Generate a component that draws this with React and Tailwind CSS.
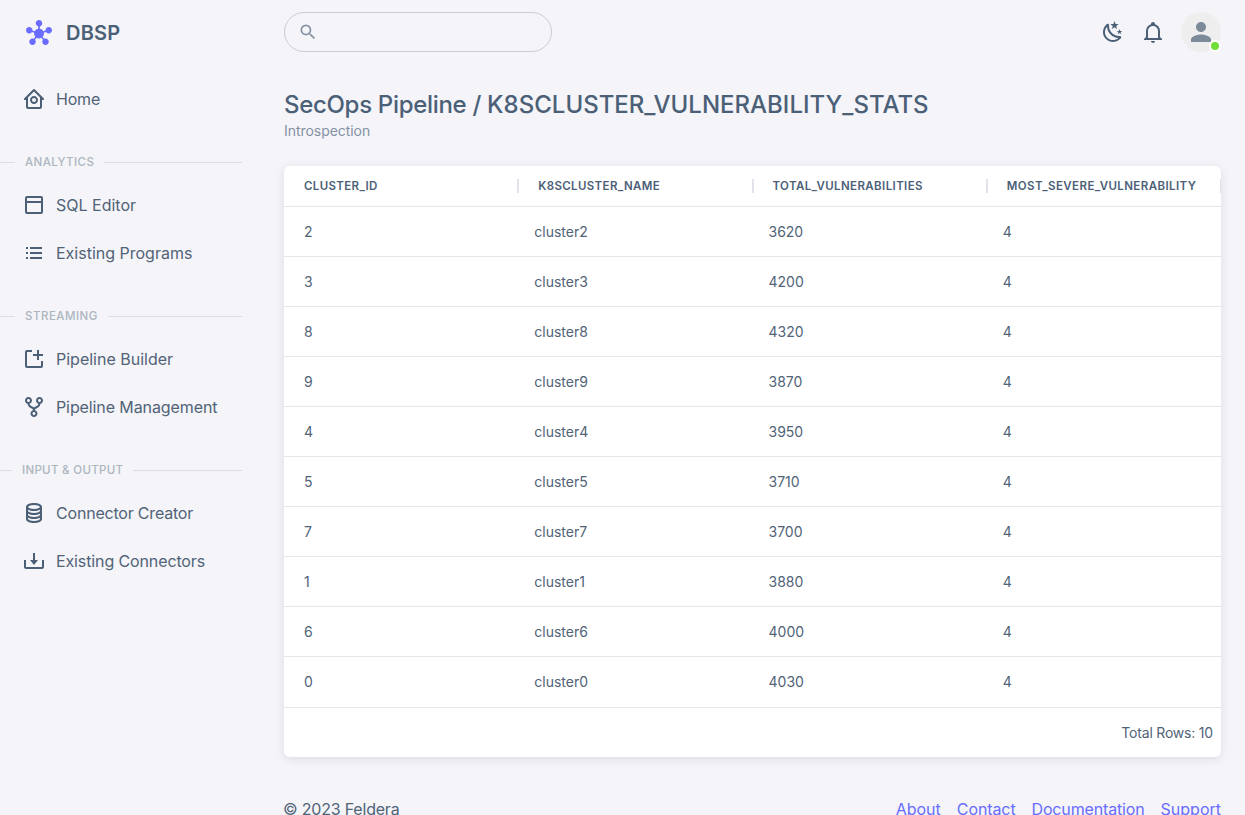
import { MdHub, MdSearch, MdPerson } from 'react-icons/md'
import { BiHomeCircle, BiListUl, BiGitRepoForked, BiCoinStack, BiDownload } from 'react-icons/bi'

const WindowIcon = ({ className }) => (
  <svg viewBox="0 0 24 24" fill="currentColor" className={className}>
    <path d="M19 3H5a2 2 0 0 0-2 2v14a2 2 0 0 0 2 2h14a2 2 0 0 0 2-2V5a2 2 0 0 0-2-2zm0 2v3H5V5zM5 19v-9h14v9z" />
  </svg>
)

const AddShapeIcon = ({ className }) => (
  <svg viewBox="0 0 24 24" fill="currentColor" className={className}>
    <path d="M5 21h14a2 2 0 0 0 2-2v-5h-2v5H5V5h5V3H5a2 2 0 0 0-2 2v14a2 2 0 0 0 2 2z" />
    <path d="M17 3h-2v4h-4v2h4v4h2V9h4V7h-4z" />
  </svg>
)

const MoonIcon = ({ className }) => (
  <svg viewBox="0 0 24 24" fill="currentColor" className={className}>
    <path d="M17.75,4.09L15.22,6.03L16.13,9.09L13.5,7.28L10.87,9.09L11.78,6.03L9.25,4.09L12.44,4L13.5,1L14.56,4L17.75,4.09M21.25,11L19.61,12.25L20.2,14.23L18.5,13.06L16.8,14.23L17.39,12.25L15.75,11L17.81,10.95L18.5,9L19.19,10.95L21.25,11M18.97,15.95C19.8,15.87 20.69,17.05 20.16,17.8C19.84,18.25 19.5,18.67 19.08,19.07C15.17,23 8.84,23 4.94,19.07C1.03,15.17 1.03,8.83 4.94,4.93C5.34,4.53 5.76,4.17 6.21,3.85C6.96,3.32 8.14,4.21 8.06,5.04C7.79,7.9 8.75,10.87 10.95,13.06C13.14,15.26 16.1,16.22 18.97,15.95M17.33,17.97C14.5,17.81 11.7,16.64 9.53,14.5C7.36,12.31 6.2,9.5 6.04,6.68C3.23,9.82 3.34,14.64 6.35,17.66C9.37,20.67 14.19,20.78 17.33,17.97Z" />
  </svg>
)

const BellIcon = ({ className }) => (
  <svg viewBox="0 0 24 24" fill="currentColor" className={className}>
    <path d="M10 21H14C14 22.1 13.1 23 12 23S10 22.1 10 21M21 19V20H3V19L5 17V11C5 7.9 7 5.2 10 4.3V4C10 2.9 10.9 2 12 2S14 2.9 14 4V4.3C17 5.2 19 7.9 19 11V17L21 19M17 11C17 8.2 14.8 6 12 6S7 8.2 7 11V18H17V11Z" />
  </svg>
)

const NavItem = ({ icon: Icon, label, className }) => (
  <a className="flex h-12 items-center gap-2.5 pl-[22px] text-base text-[#516377]">
    <Icon className="size-6 shrink-0 text-[#4b6077]" />
    <span className={className}>{label}</span>
  </a>
)

const Section = ({ label, lead, className }) => (
  <div className="mt-7 mb-2 flex h-[22px] w-[242px] items-center gap-2.5 text-[11.5px] font-medium text-[#adb6bf]">
    <span className={lead} />
    <span className={className}>{label}</span>
    <span className="h-px flex-1 bg-[#d9dde4]" />
  </div>
)

const columns = [
  ['CLUSTER_ID', 'tracking-[0.35px]'],
  ['K8SCLUSTER_NAME', 'tracking-[0.36px]'],
  ['TOTAL_VULNERABILITIES', 'tracking-[0.39px]'],
  ['MOST_SEVERE_VULNERABILITY', 'tracking-[0.41px]'],
]

const rows = [
  [2, 3620],
  [3, 4200],
  [8, 4320],
  [9, 3870],
  [4, 3950],
  [5, 3710],
  [7, 3700],
  [1, 3880],
  [6, 4000],
  [0, 4030],
]

export default function App() {
  return (
    <div className="flex h-[815px] overflow-hidden bg-[#f4f4f9] font-['Inter',sans-serif] text-[#516377]">
      <aside className="w-[260px] shrink-0">
        <div className="flex h-[65px] items-center gap-3.5 pl-[26px]">
          <MdHub className="size-[26px] text-[#696cff]" />
          <span className="text-[20px] font-semibold tracking-[0.2px] text-[#4b6077]">DBSP</span>
        </div>
        <nav className="pt-2.5">
          <NavItem icon={BiHomeCircle} label="Home" className="tracking-[-0.2px]" />
          <Section label="ANALYTICS" lead="h-px w-[15px] bg-[#d9dde4]" className="translate-y-px tracking-[0.4px]" />
          <NavItem icon={WindowIcon} label="SQL Editor" />
          <NavItem icon={BiListUl} label="Existing Programs" />
          <Section label="STREAMING" lead="h-px w-[15px] bg-[#d9dde4]" className="translate-y-px tracking-[0.5px]" />
          <NavItem icon={AddShapeIcon} label="Pipeline Builder" />
          <NavItem icon={BiGitRepoForked} label="Pipeline Management" className="tracking-[-0.1px]" />
          <Section label="INPUT &amp; OUTPUT" lead="h-px w-[12px] bg-[#d9dde4]" className="translate-y-px tracking-[0.3px]" />
          <NavItem icon={BiCoinStack} label="Connector Creator" className="tracking-[-0.2px]" />
          <NavItem icon={BiDownload} label="Existing Connectors" className="tracking-[-0.12px]" />
        </nav>
      </aside>

      <main className="flex min-w-0 flex-1 flex-col px-6">
        <header className="flex h-16 shrink-0 items-center">
          <div className="flex h-10 w-[268px] items-center rounded-full border border-[#c9cdd6] pl-[13px]">
            <MdSearch className="size-5 text-[#8592a3]" />
          </div>
          <div className="ml-auto flex items-center gap-4 text-[#4b6077]">
            <MoonIcon className="size-6" />
            <BellIcon className="size-6" />
            <div className="relative flex size-10 items-center justify-center rounded-full bg-[#eeeeee]">
              <MdPerson className="size-[30px] text-[#7d8a99]" />
              <span className="absolute right-0 bottom-0 size-3 rounded-full border-2 border-white bg-[#71dd37]" />
            </div>
          </div>
        </header>

        <h1 className="mt-[25px] h-8 shrink-0 text-2xl leading-8 font-medium whitespace-nowrap text-[#4b6077]">
          <span className="tracking-[-0.31px]">SecOps Pipeline / </span>K8SCLUSTER_VULNERABILITY_STATS
        </h1>
        <p className="h-5 shrink-0 text-sm leading-5 tracking-[-0.05px] text-[#8592a3]">Introspection</p>

        <section className="mt-[25px] h-[591px] shrink-0 overflow-hidden rounded-md bg-white text-sm shadow-[0_2px_10px_0_rgba(76,78,100,0.14)]">
          <div className="grid h-[41px] grid-cols-4 border-b border-[#e4e6e8] text-[11.5px] font-semibold text-[#4b6077]">
            {columns.map(([name, tracking]) => (
              <div key={name} className="flex items-center justify-between pl-5">
                <span className={tracking}>{name}</span>
                <span className="-mr-px h-3.5 w-0.5 shrink-0 bg-[#e2e3ea]" />
              </div>
            ))}
          </div>
          <div className="divide-y divide-[#e4e6e8]">
            {rows.map(([id, total]) => (
              <div key={id} className="grid h-[50px] grid-cols-4 items-center">
                <span className="pl-5">{id}</span>
                <span className="pl-4">cluster{id}</span>
                <span className="pl-4">{total}</span>
                <span className="pl-4">4</span>
              </div>
            ))}
          </div>
          <footer className="flex h-[50px] items-center justify-end border-t border-[#e4e6e8] pr-2 tracking-[-0.2px]">
            Total Rows: 10
          </footer>
        </section>

        <footer className="mt-10 flex h-6 shrink-0 items-center justify-between text-base">
          <span className="-ml-px tracking-[-0.2px]">© 2023 Feldera</span>
          <div className="flex gap-4 text-[#696cff]">
            <a>About</a>
            <a className="tracking-[-0.1px]">Contact</a>
            <a className="tracking-[-0.15px]">Documentation</a>
            <a>Support</a>
          </div>
        </footer>
      </main>
    </div>
  )
}
